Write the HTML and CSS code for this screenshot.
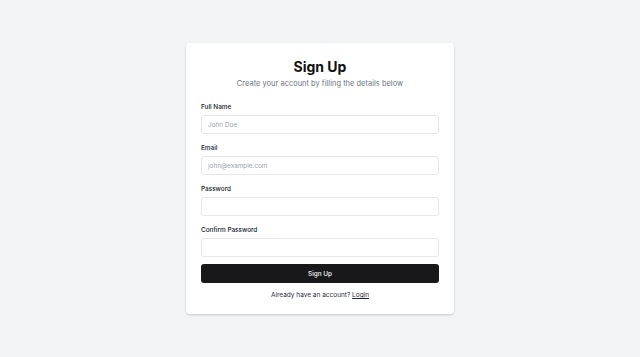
FILE: index.html
```html
<!DOCTYPE html>
<html lang="en">
<head>
	<meta charset="UTF-8">
	<meta name="viewport" content="width=device-width, initial-scale=1.0">
	<title>Sign Up</title>
	<link rel="stylesheet" href="styles.css">
</head>
<body>
	<div class="page">
		<div class="card">
			<div class="card-header">
				<h1 class="title">Sign Up</h1>
				<p class="subtitle">Create your account by filling the details below</p>
			</div>
			<form class="form">
				<div class="field">
					<label>Full Name</label>
					<input type="text" placeholder="John Doe">
				</div>
				<div class="field">
					<label>Email</label>
					<input type="email" placeholder="john@example.com">
				</div>
				<div class="field">
					<label>Password</label>
					<input type="password">
				</div>
				<div class="field">
					<label>Confirm Password</label>
					<input type="password">
				</div>
				<button type="button" class="submit">Sign Up</button>
			</form>
			<div class="footer">Already have an account? <a href="#">Login</a></div>
		</div>
	</div>
</body>
</html>
```

FILE: styles.css
```css
* {
	box-sizing: border-box;
}

body {
	margin: 0;
	background-color: #f3f4f6;
	font-family: Inter, "Liberation Sans", sans-serif;
	color: #111827;
}

.page {
	height: 357px;
	display: flex;
	justify-content: center;
	align-items: center;
}

.card {
	width: 268px;
	padding: 14px 15px 14px;
	background-color: #fff;
	border-radius: 4px;
	box-shadow: 0 1px 3px rgba(0, 0, 0, 0.12), 0 1px 2px rgba(0, 0, 0, 0.06);
}

.card-header {
	text-align: center;
}

.title {
	margin: 0;
	font-size: 14px;
	line-height: 19px;
	font-weight: 700;
	color: #111;
}

.subtitle {
	margin: 2px 0 0;
	font-size: 7.4px;
	line-height: 12px;
	color: #6b7280;
	letter-spacing: 0.05px;
}

.form {
	margin-top: 11px;
	display: flex;
	flex-direction: column;
}

.field {
	display: flex;
	flex-direction: column;
	gap: 3px;
	margin-bottom: 8px;
}

.field label {
	font-size: 6.4px;
	line-height: 10px;
	padding-top: 1px;
	font-weight: 500;
	color: #111827;
}

.field input {
	height: 19px;
	padding: 0 6px;
	border: 1px solid #e5e7eb;
	border-radius: 3px;
	font-family: inherit;
	font-size: 6.4px;
	outline: none;
}

.field input::placeholder {
	color: #9ca3af;
}

.submit {
	margin-top: -1px;
	height: 19px;
	border: none;
	border-radius: 3px;
	background-color: #18181b;
	color: #fafafa;
	font-family: inherit;
	font-size: 6.4px;
	font-weight: 500;
	cursor: pointer;
}

.footer {
	margin-top: 7px;
	text-align: center;
	font-size: 6.5px;
	line-height: 10px;
	color: #1f2937;
}

.footer a {
	color: #1f2937;
}
```
